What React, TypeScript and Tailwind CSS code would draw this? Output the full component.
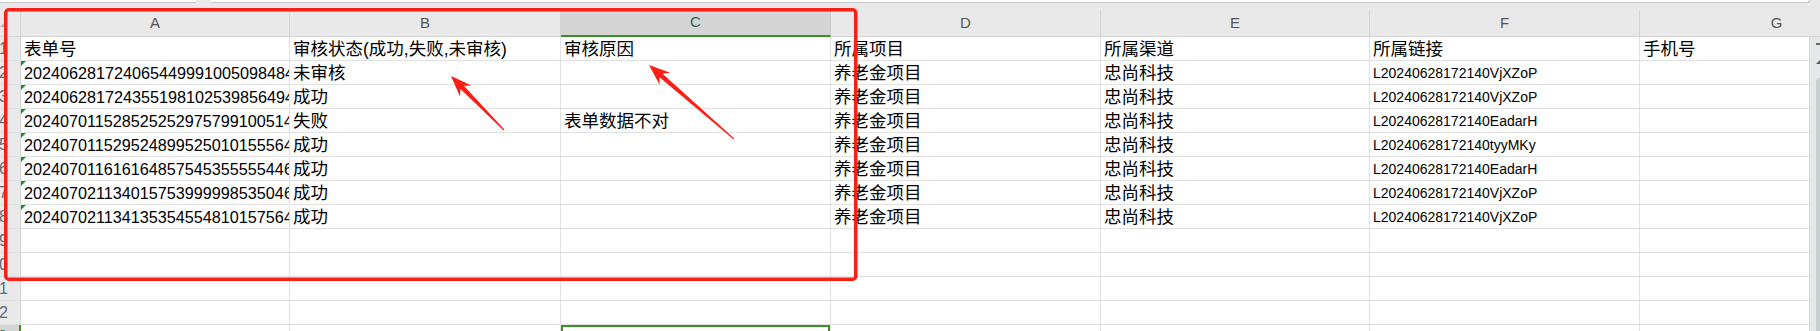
import React from "react";

const cols = [
  { k: "A", w: "w-[269px]" },
  { k: "B", w: "w-[271px]" },
  { k: "C", w: "w-[270px]" },
  { k: "D", w: "w-[270px]" },
  { k: "E", w: "w-[269px]" },
  { k: "F", w: "w-[270px]" },
  { k: "G", w: "w-[274px]" },
];

const ids = [
  "20240628172406544999100509848412",
  "20240628172435519810253985649412",
  "20240701152852525297579910051412",
  "20240701152952489952501015556412",
  "20240701161616485754535555544612",
  "20240702113401575399999853504612",
  "20240702113413535455481015756412",
];
const status = ["未审核", "成功", "失败", "成功", "成功", "成功", "成功"];
const links = [
  "L20240628172140VjXZoP",
  "L20240628172140VjXZoP",
  "L20240628172140EadarH",
  "L20240628172140tyyMKy",
  "L20240628172140EadarH",
  "L20240628172140VjXZoP",
  "L20240628172140VjXZoP",
];

type Cell = { t: string; kind?: "num" | "link" };

const header: Cell[] = [
  { t: "表单号" },
  { t: "审核状态(成功,失败,未审核)" },
  { t: "审核原因" },
  { t: "所属项目" },
  { t: "所属渠道" },
  { t: "所属链接" },
  { t: "手机号" },
];

const rows: Cell[][] = [header];
ids.forEach((id, i) => {
  rows.push([
    { t: id, kind: "num" },
    { t: status[i] },
    { t: i === 2 ? "表单数据不对" : "" },
    { t: "养老金项目" },
    { t: "忠尚科技" },
    { t: links[i], kind: "link" },
    { t: "" },
  ]);
});
while (rows.length < 13) rows.push(cols.map(() => ({ t: "" })));

function arrow(sx: number, sy: number, tx: number, ty: number) {
  const dx = tx - sx, dy = ty - sy;
  const L = Math.hypot(dx, dy);
  const ux = dx / L, uy = dy / L;
  const nx = -uy, ny = ux;
  const hl = 21, hw = 8, sw = 2.4, tw = 0.5;
  const bx = tx - ux * hl, by = ty - uy * hl;
  const jx = tx - ux * (hl - 5), jy = ty - uy * (hl - 5);
  const p = [
    [sx + nx * tw, sy + ny * tw],
    [jx + nx * sw, jy + ny * sw],
    [bx + nx * hw, by + ny * hw],
    [tx, ty],
    [bx - nx * hw, by - ny * hw],
    [jx - nx * sw, jy - ny * sw],
    [sx - nx * tw, sy - ny * tw],
  ];
  return p.map(([x, y]) => `${x.toFixed(1)},${y.toFixed(1)}`).join(" ");
}

function DataCell({ c, w, row, col }: { c: Cell; w: string; row: number; col: number }) {
  const size = c.kind === "num" ? "text-[16.2px]" : c.kind === "link" ? "text-[14px]" : "text-[17.5px]";
  return (
    <div className={`${w} relative shrink-0 h-full border-r border-[#e1e1e1] overflow-hidden whitespace-nowrap px-[3px] pt-[2px] flex items-center text-black ${size}`}>
      {c.kind === "num" && (
        <span className="absolute left-0 top-0 w-0 h-0 border-t-[5px] border-t-[#1f8a3a] border-r-[5px] border-r-transparent" />
      )}
      {c.t}
      {row === 12 && col === 2 && <span className="absolute inset-0 border-2 border-[#3e8e2a]" />}
    </div>
  );
}

export default function App() {
  return (
    <div className="relative w-[1820px] h-[331px] overflow-hidden bg-[#e9e9e9] font-['Liberation_Sans','Noto_Sans_CJK_SC',sans-serif]">
      {/* formula bar bottom */}
      <div className="flex h-[3px]">
        <div className="w-[196px] bg-white border-b border-[#c8c8c8]" />
        <div className="w-[15px]" />
        <div className="w-[1599px] bg-white border-b border-r border-[#c8c8c8] rounded-br-[3px]" />
      </div>
      <div className="h-[7px]" />

      {/* column headers */}
      <div className="flex h-[27px] text-[15px] text-[#555]">
        <div className="relative w-[21px] shrink-0 border-r border-b border-[#d5d5d5]">
          <svg className="absolute left-0 top-0" width="21" height="27">
            <polygon points="0,17 6,11 6,17" fill="#b5b5b5" />
          </svg>
        </div>
        {cols.map((c) =>
          c.k === "C" ? (
            <div key={c.k} className={`${c.w} shrink-0 bg-[#d5d5d5] border-r border-[#cacaca] border-b-2 border-b-[#3e8e2a] flex items-center justify-center text-[#1f6b4d]`}>
              {c.k}
            </div>
          ) : (
            <div key={c.k} className={`${c.w} shrink-0 border-r border-b border-[#d5d5d5] flex items-center justify-center`}>
              {c.k}
            </div>
          )
        )}
      </div>

      {/* body */}
      <div className="flex">
        <div className="w-[1809px] shrink-0 overflow-hidden bg-white">
          {rows.map((r, ri) => (
            <div key={ri} className="flex h-[24px] border-b border-[#e1e1e1]">
              <div className={`w-[21px] shrink-0 h-full overflow-hidden flex items-center justify-end pr-[12px] text-[16px] whitespace-nowrap ${ri === 12 ? "bg-[#d5d5d5] border-r-2 border-[#3e8e2a] text-[#1f6b4d]" : "bg-[#e9e9e9] border-r border-[#d5d5d5] text-[#5a6b7c]"}`}>
                {ri + 1}
              </div>
              {r.map((c, ci) => (
                <DataCell key={ci} c={c} w={cols[ci].w} row={ri} col={ci} />
              ))}
            </div>
          ))}
        </div>
        <div className="relative w-[11px] h-[294px] bg-[#e4e8e8] border-l border-[#d6dada]">
          <div className="absolute left-[6px] top-[6px] w-[5px] h-[2px] bg-[#666]" />
          <svg className="absolute left-[6px] top-[22px]" width="5" height="5">
            <polygon points="0,5 5,0 5,5" fill="#555" />
          </svg>
          <div className="absolute left-[6px] top-[41px] w-[5px] bottom-0 bg-[#c9cfcf] rounded-tl-[4px]" />
        </div>
      </div>

      {/* annotations */}
      <svg className="absolute left-0 top-0 pointer-events-none" width="1820" height="331">
        <rect x="5.75" y="9.75" width="850" height="269.5" rx="3" fill="none" stroke="#fb1f16" strokeWidth="3.5" />
        <polygon points={arrow(504, 130, 451, 76)} fill="#fb1f16" />
        <polygon points={arrow(734, 139, 649, 65)} fill="#fb1f16" />
      </svg>
    </div>
  );
}
